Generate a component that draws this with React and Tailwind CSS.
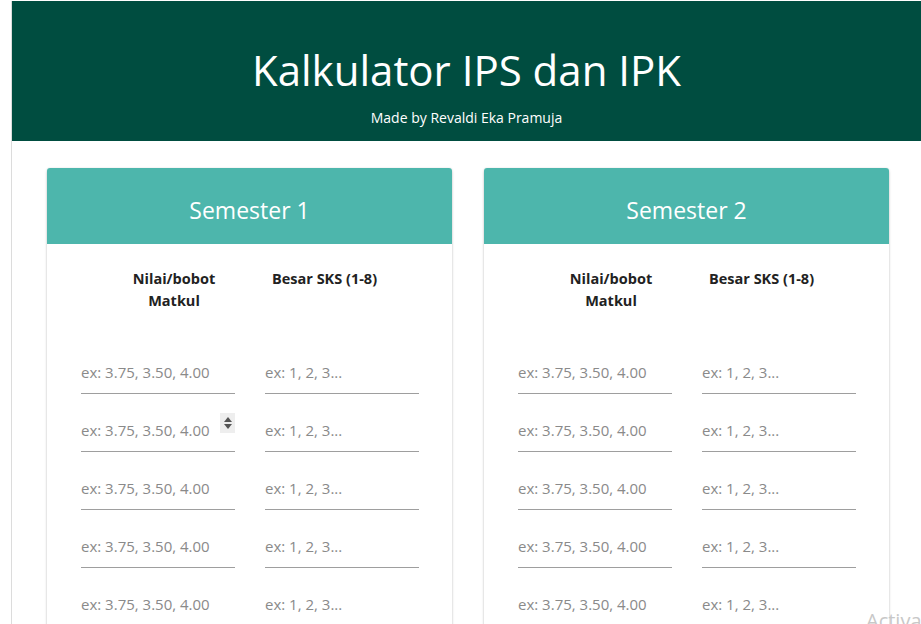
const ROWS = [0, 1, 2, 3, 4]

function Spinner() {
  return (
    <span className="absolute right-0 top-1/2 -translate-y-1/2 w-[15px] h-[20px] bg-[#eeeeee] flex flex-col items-center justify-center gap-[2px]">
      <svg width="8" height="5" viewBox="0 0 8 5"><path d="M0 5 L4 0 L8 5 Z" fill="#555" /></svg>
      <svg width="8" height="5" viewBox="0 0 8 5"><path d="M0 0 L4 5 L8 0 Z" fill="#555" /></svg>
    </span>
  )
}

function Field({ placeholder, spinner }) {
  return (
    <div className="relative h-[58px] flex items-end">
      <input
        className="w-full h-[44px] border-b border-[#9e9e9e] text-[15px] text-[#333] placeholder:text-[#8a8a8a] outline-none bg-transparent"
        placeholder={placeholder}
      />
      {spinner && <Spinner />}
    </div>
  )
}

function SemesterCard({ title, hover }) {
  return (
    <div className="w-[405px] bg-white rounded-[3px] shadow-[0_2px_3px_rgba(0,0,0,0.18),0_0_2px_rgba(0,0,0,0.12)]">
      <div className="h-[76px] bg-[#4db6ac] rounded-t-[3px] flex items-center justify-center pt-[8px]">
        <h2 className="text-[23px] text-white leading-none">{title}</h2>
      </div>
      <div className="px-[34px] pt-[24px] pb-6">
        <div className="grid grid-cols-[154px_154px] gap-x-[30px]">
          <p className="text-[14.5px] font-bold text-[#222] leading-[22px] text-center pl-[32px]">Nilai/bobot<br />Matkul</p>
          <p className="text-[14.5px] font-bold text-[#222] leading-[22px] pl-[7px]">Besar SKS (1-8)</p>
        </div>
        <div className="grid grid-cols-[154px_154px] gap-x-[30px] mt-[24px]">
          {ROWS.map(i => (
            <div key={i} className="contents">
              <Field placeholder="ex: 3.75, 3.50, 4.00" spinner={hover && i === 1} />
              <Field placeholder="ex: 1, 2, 3..." />
            </div>
          ))}
        </div>
      </div>
    </div>
  )
}

export default function App() {
  return (
    <div className="h-[624px] overflow-hidden bg-white font-['Open_Sans',sans-serif] relative">
      <div className="ml-[11px] border-l border-[#dcdcdc] w-[940px] min-h-[624px]">
        <header className="h-[140px] mt-[1px] bg-[#004d40] flex flex-col items-center pt-[48px] pr-[30px]">
          <h1 className="text-[42px] leading-none text-white">Kalkulator IPS dan IPK</h1>
          <p className="text-[14px] text-white mt-[16px]">Made by Revaldi Eka Pramuja</p>
        </header>
        <div className="flex gap-[32px] pl-[35px] pt-[27px]">
          <SemesterCard title="Semester 1" hover />
          <SemesterCard title="Semester 2" />
        </div>
      </div>
      <div className="absolute left-[866px] top-[606px] text-[20px] text-[#c8c8c8] whitespace-nowrap">Activate Windows</div>
    </div>
  )
}
